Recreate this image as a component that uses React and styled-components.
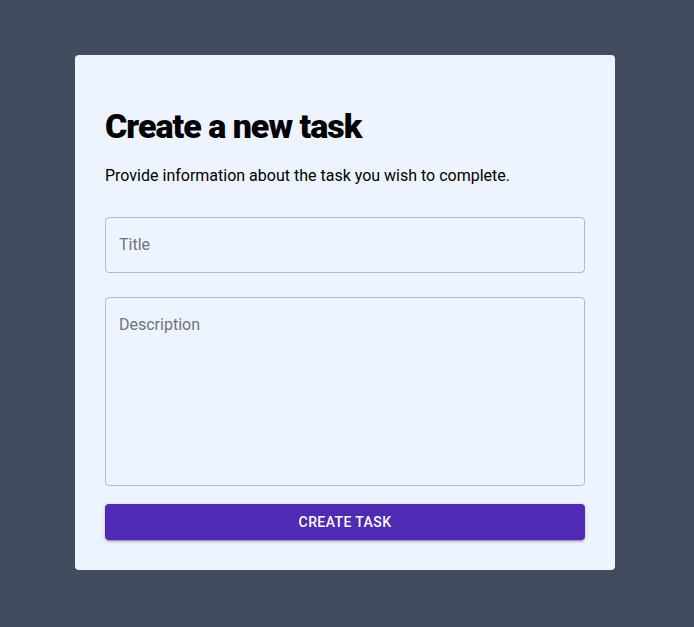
import styled, { createGlobalStyle } from 'styled-components';

const GlobalStyle = createGlobalStyle`
  html, body {
    margin: 0;
    padding: 0;
    background: #434c5e;
    font-family: Roboto, 'Liberation Sans', sans-serif;
  }
  * {
    box-sizing: border-box;
  }
`;

function App() {
  return (
    <Page>
      <GlobalStyle />
      <Card>
        <Heading>Create a new task</Heading>
        <Intro>Provide information about the task you wish to complete.</Intro>
        <Form onSubmit={(e) => e.preventDefault()}>
          <TitleInput type='text' placeholder='Title' />
          <DescriptionInput placeholder='Description' />
          <SubmitButton type='submit'>Create task</SubmitButton>
        </Form>
      </Card>
    </Page>
  );
}

export default App;

const Page = styled.div`
  min-height: 100vh;
  padding: 55px 0 0 75px;
`;

const Card = styled.section`
  width: 540px;
  padding: 50px 30px 30px;
  background: #edf3ff;
  border-radius: 4px;
`;

const Heading = styled.h1`
  margin: 0;
  font-size: 34px;
  line-height: 42px;
  font-weight: 900;
  color: #000;
  letter-spacing: -1px;
`;

const Intro = styled.p`
  margin: 17px 0 0;
  font-size: 16px;
  line-height: 24px;
  color: #000;
`;

const Form = styled.form`
  display: flex;
  flex-direction: column;
  margin-top: 29px;
`;

const fieldStyles = `
  width: 100%;
  font-family: Roboto, 'Liberation Sans', sans-serif;
  font-size: 16px;
  line-height: 23px;
  color: #000;
  background: transparent;
  border: 1px solid rgba(0, 0, 0, 0.23);
  border-radius: 4px;
  outline: none;

  &::placeholder {
    color: #6f737c;
    opacity: 1;
  }
`;

const TitleInput = styled.input`
  ${fieldStyles}
  height: 56px;
  padding: 14.5px 13px 16.5px;
`;

const DescriptionInput = styled.textarea`
  ${fieldStyles}
  height: 189px;
  margin-top: 24px;
  padding: 14.5px 13px;
  resize: none;
`;

const SubmitButton = styled.button`
  height: 36px;
  margin-top: 18px;
  border: none;
  border-radius: 4px;
  background: #4f2ab5;
  color: #fff;
  font-family: Roboto, 'Liberation Sans', sans-serif;
  font-size: 14px;
  font-weight: 500;
  letter-spacing: 0.4px;
  text-transform: uppercase;
  box-shadow: 0 3px 1px -2px rgba(0, 0, 0, 0.2), 0 2px 2px 0 rgba(0, 0, 0, 0.14),
    0 1px 5px 0 rgba(0, 0, 0, 0.12);
  cursor: pointer;
`;
